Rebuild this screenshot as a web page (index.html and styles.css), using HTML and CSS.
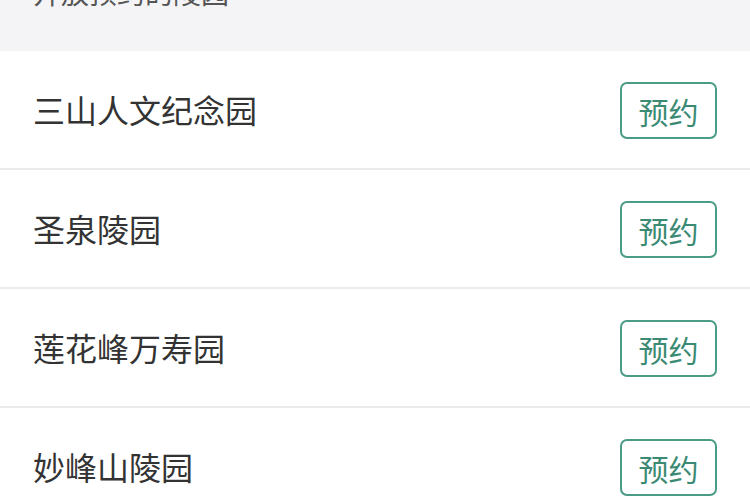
FILE: index.html
```html
<!DOCTYPE html>
<html lang="zh">
<head>
<meta charset="utf-8">
<link rel="stylesheet" href="styles.css">
</head>
<body>
<div class="page">
  <div class="section-head"><span class="section-title">开放预约的陵园</span></div>
  <ul class="list">
    <li class="row"><span class="name">三山人文纪念园</span><button class="book">预约</button></li>
    <li class="row"><span class="name">圣泉陵园</span><button class="book">预约</button></li>
    <li class="row"><span class="name">莲花峰万寿园</span><button class="book">预约</button></li>
    <li class="row"><span class="name">妙峰山陵园</span><button class="book">预约</button></li>
  </ul>
</div>
</body>
</html>
```

FILE: styles.css
```css
html, body {
  margin: 0;
  padding: 0;
  background: #ffffff;
  font-family: "Noto Sans CJK SC", "Noto Sans", sans-serif;
  overflow: hidden;
}
.page {
  width: 750px;
  height: 500px;
  overflow: hidden;
}
.section-head {
  height: 51px;
  background: #f4f4f6;
  padding-left: 33px;
  overflow: hidden;
}
.section-title {
  display: block;
  margin-top: -22px;
  font-size: 28px;
  line-height: 28px;
  color: #555555;
}
.list {
  list-style: none;
  margin: 0;
  padding: 0;
}
.row {
  height: 117px;
  border-bottom: 2px solid #ebebeb;
  display: flex;
  align-items: center;
  justify-content: space-between;
  padding: 0 33px;
  background: #ffffff;
}
.name {
  font-size: 32px;
  color: #333333;
  line-height: 1;
  margin-top: -2px;
}
.book {
  width: 97px;
  height: 57px;
  border: 2px solid #4a9c86;
  border-radius: 7px;
  background: #ffffff;
  color: #3b8a74;
  font-family: "Noto Sans CJK SC", "Noto Sans", sans-serif;
  font-size: 30px;
  line-height: 1;
  padding: 0;
  box-sizing: border-box;
  margin-top: 2px;
}
```
